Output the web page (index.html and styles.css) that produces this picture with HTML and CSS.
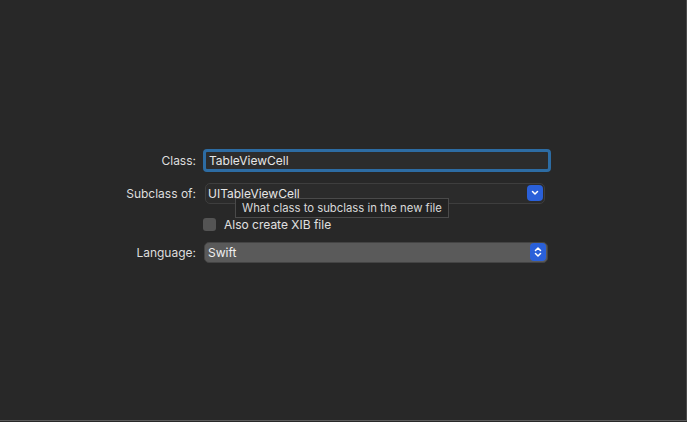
FILE: index.html
```html
<!DOCTYPE html>
<html>
<head>
<meta charset="utf-8">
<link rel="stylesheet" href="styles.css">
</head>
<body>
<div class="window">
  <div class="form">
    <div class="label">Class:</div>
    <div class="field-wrap"><div class="textfield">TableViewCell</div></div>

    <div class="label">Subclass of:</div>
    <div class="field-wrap">
      <div class="combo">
        <span>UITableViewCell</span>
        <span class="btn">
          <svg width="10" height="8" viewBox="0 0 10 8"><path d="M2.5 2.5 L5 5 L7.5 2.5" fill="none" stroke="#fff" stroke-width="1.5" stroke-linecap="round" stroke-linejoin="round"/></svg>
        </span>
      </div>
      <div class="tooltip">What class to subclass in the new file</div>
    </div>

    <div class="label"></div>
    <div class="check-row"><span class="checkbox"></span><span>Also create XIB file</span></div>

    <div class="label">Language:</div>
    <div class="field-wrap">
      <div class="popup">
        <span>Swift</span>
        <span class="btn btn2">
          <svg width="10" height="14" viewBox="0 0 10 14"><path d="M2.5 5.5 L5 3 L7.5 5.5 M2.5 8.5 L5 11 L7.5 8.5" fill="none" stroke="#fff" stroke-width="1.5" stroke-linecap="round" stroke-linejoin="round"/></svg>
        </span>
      </div>
    </div>
  </div>
</div>
</body>
</html>
```

FILE: styles.css
```css
html, body {
  margin: 0;
  padding: 0;
  background: #282828;
}
body {
  font-family: "Inter", "Liberation Sans", sans-serif;
  font-size: 12px;
  color: #dedede;
}
.window {
  width: 686px;
  height: 420px;
  border-right: 1px solid #4a4a4a;
  border-bottom: 1px solid #5a5a5a;
  background: #282828;
  display: flex;
  flex-direction: column;
}
.form {
  display: grid;
  grid-template-columns: 196px 348px;
  grid-template-rows: 23px 42px 20px 36px;
  column-gap: 7px;
  margin-top: 149px;
  align-items: center;
}
.label {
  text-align: right;
}
.field-wrap {
  position: relative;
  height: 100%;
  display: flex;
  align-items: center;
}
.textfield {
  width: 342px;
  height: 17px;
  line-height: 17px;
  border: 3px solid #2d6ca3;
  border-radius: 4px;
  background: #2c2c2c;
  padding-left: 3px;
  color: #e6e6e6;
}
.combo {
  margin-left: 2px;
  width: 336px;
  height: 19px;
  border: 1px solid #3e3e3e;
  border-radius: 5px;
  background: #2b2b2b;
  display: flex;
  align-items: center;
  justify-content: space-between;
  padding-left: 2px;
  color: #e6e6e6;
}
.btn {
  width: 16px;
  height: 16px;
  background: #2a60d9;
  border-radius: 4px;
  display: flex;
  align-items: center;
  justify-content: center;
  margin-right: 1px;
}
.btn2 {
  height: 18px;
}
.tooltip {
  position: absolute;
  left: 32px;
  top: 26px;
  height: 18px;
  line-height: 18px;
  padding: 0 6px;
  background: #232323;
  border: 1px solid #4a4a4a;
  font-size: 11.3px;
  color: #d8d8d8;
  white-space: nowrap;
  z-index: 2;
}
.check-row {
  display: flex;
  align-items: center;
  gap: 8px;
  color: #e0e0e0;
}
.checkbox {
  width: 13px;
  height: 13px;
  background: #545454;
  border-radius: 3px;
  display: inline-block;
}
.popup {
  margin-left: 1px;
  width: 339px;
  height: 19px;
  border-radius: 5px;
  background: #5a5a5a;
  border: 1px solid #444;
  display: flex;
  align-items: center;
  justify-content: space-between;
  padding-left: 3px;
  color: #f0f0f0;
}
```
